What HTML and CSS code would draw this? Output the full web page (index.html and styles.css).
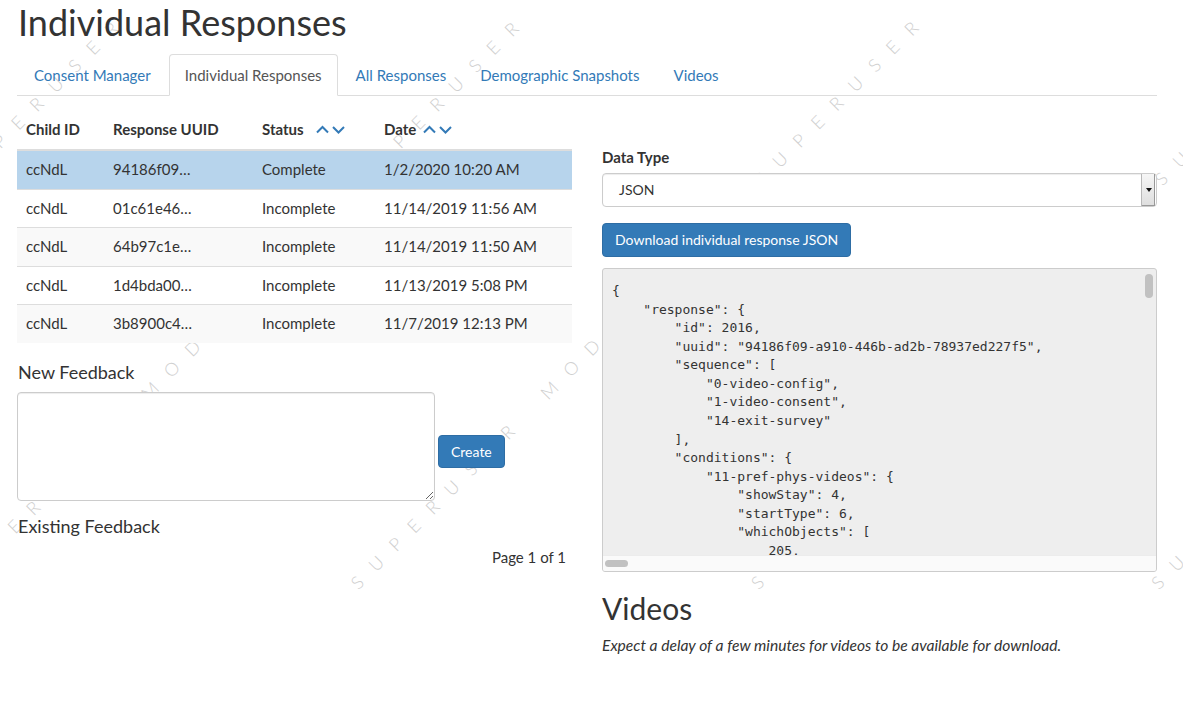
FILE: index.html
```html
<!DOCTYPE html>
<html lang="en">
<head>
<meta charset="utf-8">
<title>Individual Responses</title>
<link rel="stylesheet" href="styles.css">
</head>
<body>
<div class="wm-clip" aria-hidden="true">
  <div class="wm">
    <div class="wm-line wm-k0"><span class="wm-unit">SUPERUSER MODE</span><span class="wm-unit">SUPERUSER MODE</span><span class="wm-unit">SUPERUSER MODE</span><span class="wm-unit">SUPERUSER MODE</span></div>
    <div class="wm-line wm-k1"><span class="wm-unit">SUPERUSER MODE</span><span class="wm-unit">SUPERUSER MODE</span><span class="wm-unit">SUPERUSER MODE</span><span class="wm-unit">SUPERUSER MODE</span></div>
    <div class="wm-line wm-k2"><span class="wm-unit">SUPERUSER MODE</span><span class="wm-unit">SUPERUSER MODE</span><span class="wm-unit">SUPERUSER MODE</span><span class="wm-unit">SUPERUSER MODE</span></div>
    <div class="wm-line wm-k3"><span class="wm-unit">SUPERUSER MODE</span><span class="wm-unit">SUPERUSER MODE</span><span class="wm-unit">SUPERUSER MODE</span><span class="wm-unit">SUPERUSER MODE</span></div>
    <div class="wm-line wm-k4"><span class="wm-unit">SUPERUSER MODE</span><span class="wm-unit">SUPERUSER MODE</span><span class="wm-unit">SUPERUSER MODE</span><span class="wm-unit">SUPERUSER MODE</span></div>
  </div>
</div>

<div class="page">
  <h1 class="title">Individual Responses</h1>
  <ul class="tabs">
    <li><a href="#">Consent Manager</a></li>
    <li class="active"><a href="#">Individual Responses</a></li>
    <li><a href="#">All Responses</a></li>
    <li><a href="#">Demographic Snapshots</a></li>
    <li><a href="#">Videos</a></li>
  </ul>

  <div class="columns">
    <div class="col-left">
      <table class="responses">
        <colgroup>
          <col class="c1"><col class="c2"><col class="c3"><col class="c4">
        </colgroup>
        <thead>
          <tr>
            <th>Child ID</th>
            <th>Response UUID</th>
            <th>Status<span class="sort sort-status"><svg width="30" height="10" viewBox="0 0 30 10"><polyline points="1,8.5 6.5,3 12,8.5"/><polyline points="17,3 22.5,8.5 28,3"/></svg></span></th>
            <th>Date<span class="sort sort-date"><svg width="30" height="10" viewBox="0 0 30 10"><polyline points="1,8.5 6.5,3 12,8.5"/><polyline points="17,3 22.5,8.5 28,3"/></svg></span></th>
          </tr>
        </thead>
        <tbody>
          <tr class="selected"><td>ccNdL</td><td>94186f09…</td><td>Complete</td><td>1/2/2020 10:20 AM</td></tr>
          <tr><td>ccNdL</td><td>01c61e46…</td><td>Incomplete</td><td>11/14/2019 11:56 AM</td></tr>
          <tr><td>ccNdL</td><td>64b97c1e…</td><td>Incomplete</td><td>11/14/2019 11:50 AM</td></tr>
          <tr><td>ccNdL</td><td>1d4bda00…</td><td>Incomplete</td><td>11/13/2019 5:08 PM</td></tr>
          <tr><td>ccNdL</td><td>3b8900c4…</td><td>Incomplete</td><td>11/7/2019 12:13 PM</td></tr>
        </tbody>
      </table>

      <h4 class="fb-title">New Feedback</h4>
      <div class="fb-row">
        <textarea class="fb-text"></textarea>
        <button class="btn btn-create">Create</button>
      </div>
      <h4 class="fb-title fb-existing">Existing Feedback</h4>
      <div class="pager">Page 1 of 1</div>
    </div>

    <div class="col-right">
      <div class="field-label">Data Type</div>
      <div class="select"><span class="select-value">JSON</span><span class="select-arrow"><span class="tri"></span></span></div>
      <button class="btn btn-download">Download individual response JSON</button>
      <div class="json-box">
<pre class="json">{
    "response": {
        "id": 2016,
        "uuid": "94186f09-a910-446b-ad2b-78937ed227f5",
        "sequence": [
            "0-video-config",
            "1-video-consent",
            "14-exit-survey"
        ],
        "conditions": {
            "11-pref-phys-videos": {
                "showStay": 4,
                "startType": 6,
                "whichObjects": [
                    205,
                    12,
                    7
                ]
            }
        }
    }
}</pre>
        <span class="vthumb"></span>
        <div class="hbar"><span class="hthumb"></span></div>
      </div>
      <h2 class="videos-title">Videos</h2>
      <p class="note">Expect a delay of a few minutes for videos to be available for download.</p>
    </div>
  </div>
</div>
</body>
</html>
```

FILE: styles.css
```css
html, body {
  margin: 0;
  padding: 0;
}

body {
  font-family: Lato, "Open Sans", "Liberation Sans", sans-serif;
  font-size: 15px;
  line-height: 1.42857;
  color: #333;
  background: #fff;
  position: relative;
  min-height: 701px;
  overflow: hidden;
}

/* watermark layer */
.wm-clip {
  position: absolute;
  top: 0;
  left: 0;
  width: 100%;
  height: 701px;
  overflow: hidden;
  z-index: 0;
  pointer-events: none;
}

.wm {
  position: absolute;
  top: 0;
  left: 0;
  transform: rotate(-45deg);
  transform-origin: 0 0;
  display: flex;
  flex-direction: column;
  align-items: flex-start;
}

.wm-line {
  display: flex;
  white-space: nowrap;
  height: 20px;
  line-height: 20px;
  margin-top: 262.8px;
}

.wm-line:first-child { margin-top: 88.9px; }
.wm-k0 { margin-left: -730px; }
.wm-k1 { margin-left: -1018px; }
.wm-k2 { margin-left: -735px; }
.wm-k3 { margin-left: -1023px; }
.wm-k4 { margin-left: -740px; }

.wm-unit {
  flex: 0 0 571px;
  font-size: 18px;
  font-weight: 300;
  letter-spacing: 15.5px;
  word-spacing: 10px;
  color: #d0d0d0;
}

/* page */
.page {
  position: relative;
  z-index: 1;
  width: 1140px;
  padding: 0 17px;
}

.title {
  margin: 3px 0 11px 1px;
  font-size: 36px;
  font-weight: 400;
  line-height: 1.1;
}

.tabs {
  display: flex;
  list-style: none;
  margin: 0;
  padding: 0 0 0 1px;
  border-bottom: 1px solid #ddd;
}

.tabs li {
  margin-right: 2px;
  margin-bottom: -1px;
}

.tabs a {
  display: block;
  padding: 10px 15px;
  line-height: 20px;
  border: 1px solid transparent;
  border-radius: 4px 4px 0 0;
  color: #337ab7;
  text-decoration: none;
}

.tabs li.active a {
  color: #555;
  background: #fff;
  border-color: #ddd #ddd transparent;
}

.columns {
  display: grid;
  grid-template-columns: 555px 555px;
  column-gap: 30px;
  margin-top: 15px;
}

/* table */
.responses {
  width: 555px;
  border-collapse: collapse;
  table-layout: fixed;
}

.c1 { width: 87px; }
.c2 { width: 149px; }
.c3 { width: 122px; }
.c4 { width: 197px; }

.responses th {
  text-align: left;
  font-weight: 700;
  padding: 8px 9px;
  border-bottom: 2px solid #ddd;
  white-space: nowrap;
}

.responses td {
  padding: 8px 9px;
  border-top: 1px solid #ddd;
  white-space: nowrap;
}

.responses tbody tr:nth-child(odd) { background: #f9f9f9; }
.responses tbody tr.selected { background: #b7d4ec; }

.sort {
  display: inline-block;
  vertical-align: middle;
  position: relative;
  top: -2px;
}

.sort-status { margin-left: 12px; }
.sort-date { margin-left: 7px; }

.sort svg polyline {
  fill: none;
  stroke: #337ab7;
  stroke-width: 2;
}

/* feedback */
.fb-title {
  margin: 20px 0 10px 1px;
  font-size: 18px;
  font-weight: 400;
  line-height: 1.1;
}

.fb-existing {
  margin-top: 16px;
  margin-bottom: 10px;
}

.fb-row {
  display: flex;
  align-items: center;
  gap: 3px;
}

.fb-text {
  box-sizing: border-box;
  width: 418px;
  height: 109px;
  margin: 0;
  border: 1px solid #ccc;
  border-radius: 4px;
  box-shadow: inset 0 1px 1px rgba(0, 0, 0, 0.075);
  font-family: inherit;
  font-size: 14px;
  padding: 6px 12px;
  resize: vertical;
  background: #fff;
}

.btn {
  display: inline-block;
  box-sizing: border-box;
  font-family: inherit;
  font-size: 14px;
  line-height: 20px;
  color: #fff;
  background: #337ab7;
  border: 1px solid #2e6da4;
  border-radius: 4px;
  padding: 6px 12px;
  cursor: pointer;
}

.btn-create {
  height: 33px;
  padding: 5px 12px;
  margin-top: 10px;
}

.pager {
  text-align: right;
  padding-right: 6px;
}

/* right column */
.field-label {
  margin-top: 36px;
  margin-bottom: 5px;
  font-weight: 700;
}

.select {
  box-sizing: border-box;
  height: 34px;
  display: flex;
  align-items: center;
  justify-content: space-between;
  border: 1px solid #ccc;
  border-radius: 4px;
  background: #fff;
  box-shadow: inset 0 1px 1px rgba(0, 0, 0, 0.075);
  font-size: 14px;
  padding-left: 16px;
}

.select-arrow {
  align-self: stretch;
  width: 13px;
  margin: 0 1px 0 0;
  background: linear-gradient(#f6f6f6, #dedede);
  border-left: 1px solid #b8b8b8;
  box-shadow: inset -1px -1px 0 #999;
  display: flex;
  align-items: center;
  justify-content: center;
}

.tri {
  width: 0;
  height: 0;
  border-left: 3px solid transparent;
  border-right: 3px solid transparent;
  border-top: 4px solid #111;
}

.btn-download {
  margin-top: 16px;
  height: 34px;
}

.json-box {
  position: relative;
  margin-top: 11px;
  box-sizing: border-box;
  height: 304px;
  border: 1px solid #ccc;
  border-radius: 3px;
  background: #eee;
  overflow: hidden;
}

.json {
  margin: 0;
  padding: 13px 10px 0 9px;
  font-family: "DejaVu Sans Mono", "Liberation Mono", monospace;
  font-size: 13px;
  line-height: 18.57px;
  color: #333;
  white-space: pre;
}

.vthumb {
  position: absolute;
  right: 3px;
  top: 5px;
  width: 8px;
  height: 24px;
  border-radius: 4px;
  background: #c1c1c1;
}

.hbar {
  position: absolute;
  left: 0;
  right: 0;
  bottom: 0;
  height: 15px;
  background: #fafafa;
  border-top: 1px solid #ececec;
}

.hthumb {
  position: absolute;
  left: 2px;
  top: 4px;
  width: 23px;
  height: 7px;
  border-radius: 4px;
  background: #c1c1c1;
}

.videos-title {
  margin: 20px 0 9px;
  font-size: 30px;
  font-weight: 400;
  line-height: 1.1;
}

.note {
  margin: 0;
  font-style: italic;
  font-size: 15.6px;
}
```
